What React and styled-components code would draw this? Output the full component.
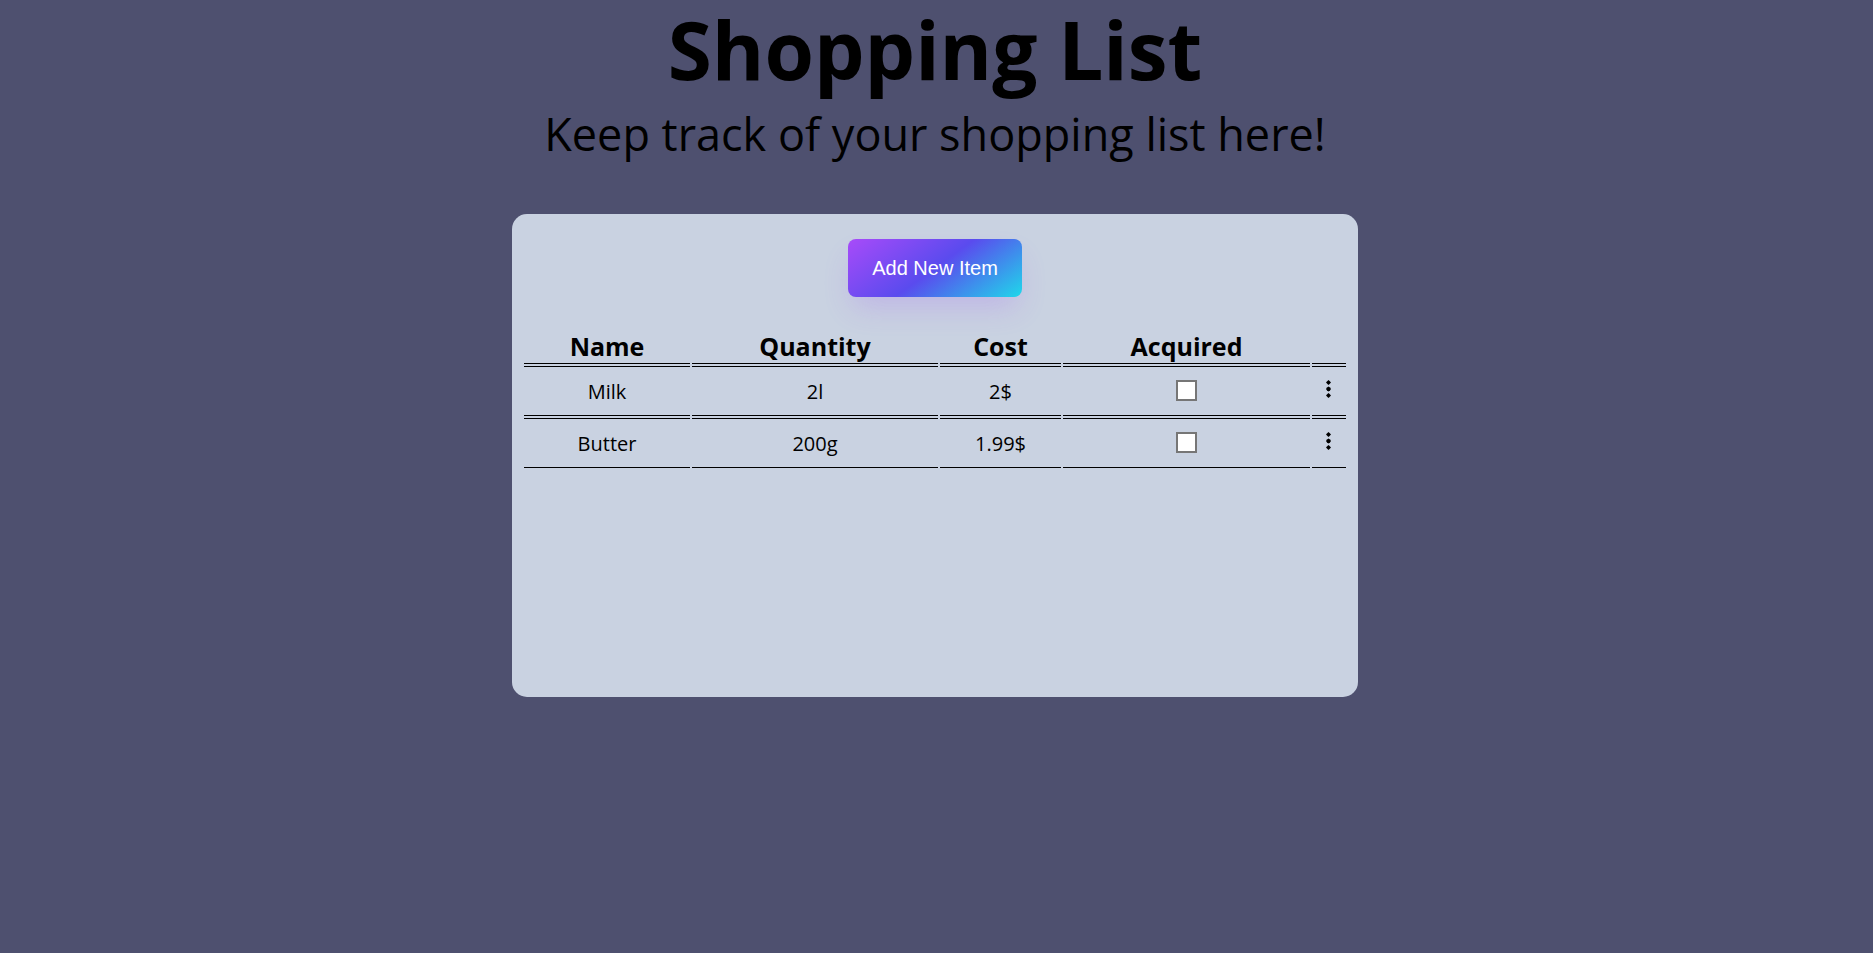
import React from "react";
import styled, { createGlobalStyle } from "styled-components";

const GlobalStyle = createGlobalStyle`
  *, *::before, *::after { box-sizing: border-box; }
  body {
    margin: 0;
    background: #4e506f;
    color: #000;
    font-family: "Open Sans", sans-serif;
    font-size: 20px;
  }
`;

const Page = styled.main`
  min-height: 100vh;
  padding: 0 3px 0 0;
  display: flex;
  flex-direction: column;
  align-items: center;
`;

const Title = styled.h1`
  margin: 0;
  font-size: 80px;
  font-weight: 700;
  line-height: 98px;
  text-align: center;
`;

const Subtitle = styled.p`
  margin: 0 0 44px;
  font-size: 45px;
  line-height: 72px;
  text-align: center;
`;

const Card = styled.section`
  width: 100%;
  max-width: 846px;
  min-height: 483px;
  padding: 25px 10px;
  border-radius: 15px;
  background: #c9d2e1;
  display: flex;
  flex-direction: column;
  align-items: center;
`;

const AddButton = styled.button`
  padding: 19px 24px;
  border: 0;
  border-radius: 8px;
  background-image: linear-gradient(144deg, #a84bf9, #5a4bee 50%, #1fd8ea);
  box-shadow: rgba(151, 65, 252, 0.2) 0 15px 30px -5px;
  color: #fff;
  font-family: "Liberation Sans", Arial, sans-serif;
  font-size: 20px;
  line-height: 20px;
  white-space: nowrap;
  cursor: pointer;
`;

const ItemTable = styled.table`
  width: 100%;
  margin-top: 28px;
  table-layout: fixed;
  border-collapse: separate;
  border-spacing: 2px;
`;

const Column = styled.col`
  width: ${({ $width }) => $width}px;
`;

const HeaderCell = styled.th`
  height: 37px;
  padding: 2px 0 0;
  border-bottom: 1px solid #000;
  font-size: 25px;
  font-weight: 700;
  line-height: 34px;
  text-align: center;
`;

const Cell = styled.td`
  height: 50px;
  padding: 2px 0 0;
  border-top: 1px solid #000;
  border-bottom: 1px solid #000;
  line-height: 28px;
  text-align: center;
  vertical-align: middle;
`;

const ControlCell = styled(Cell)`
  padding: 0 0 2px;
`;

const Checkbox = styled.input`
  appearance: none;
  display: block;
  width: 21px;
  height: 21px;
  margin: 0 auto;
  border: 2px solid #767676;
  background: #fff;
  cursor: pointer;

  &:checked {
    background: #5b42f3;
  }
`;

const MenuButton = styled.button`
  display: block;
  margin: 0 auto;
  padding: 0 5px 2px 4px;
  border: 0;
  background: none;
  color: inherit;
  cursor: pointer;

  svg {
    display: block;
  }
`;

const columns = [
  { label: "Name", width: 166 },
  { label: "Quantity", width: 246 },
  { label: "Cost", width: 121 },
  { label: "Acquired", width: 247 },
  { label: "", width: 34 },
];

const items = [
  { name: "Milk", quantity: "2l", cost: "2$" },
  { name: "Butter", quantity: "200g", cost: "1.99$" },
];

function DotsIcon() {
  return (
    <svg width="5" height="18" viewBox="0 0 5 18" fill="currentColor" aria-hidden="true">
      <path d="M2.5 0 L3.8 1.2 L5 2.5 L3.8 3.8 L2.5 5 L1.2 3.8 L0 2.5 L1.2 1.2Z" />
      <path d="M2.5 6.5 L4 7.5 L5 9 L4 10.5 L2.5 11.5 L1 10.5 L0 9 L1 7.5Z" />
      <path d="M2.5 13 L3.8 14.2 L5 15.5 L3.8 16.8 L2.5 18 L1.2 16.8 L0 15.5 L1.2 14.2Z" />
    </svg>
  );
}

function ItemRow({ item }) {
  return (
    <tr>
      <Cell>{item.name}</Cell>
      <Cell>{item.quantity}</Cell>
      <Cell>{item.cost}</Cell>
      <ControlCell>
        <Checkbox type="checkbox" aria-label={`${item.name} acquired`} />
      </ControlCell>
      <ControlCell>
        <MenuButton type="button" aria-label={`Options for ${item.name}`}>
          <DotsIcon />
        </MenuButton>
      </ControlCell>
    </tr>
  );
}

export default function App() {
  return (
    <>
      <GlobalStyle />
      <Page>
        <Title>Shopping List</Title>
        <Subtitle>Keep track of your shopping list here!</Subtitle>
        <Card>
          <AddButton type="button">Add New Item</AddButton>
          <ItemTable>
            <colgroup>
              {columns.map((column) => (
                <Column key={column.label} $width={column.width} />
              ))}
            </colgroup>
            <thead>
              <tr>
                {columns.map((column) => (
                  <HeaderCell key={column.label} scope="col">
                    {column.label}
                  </HeaderCell>
                ))}
              </tr>
            </thead>
            <tbody>
              {items.map((item) => (
                <ItemRow key={item.name} item={item} />
              ))}
            </tbody>
          </ItemTable>
        </Card>
      </Page>
    </>
  );
}
